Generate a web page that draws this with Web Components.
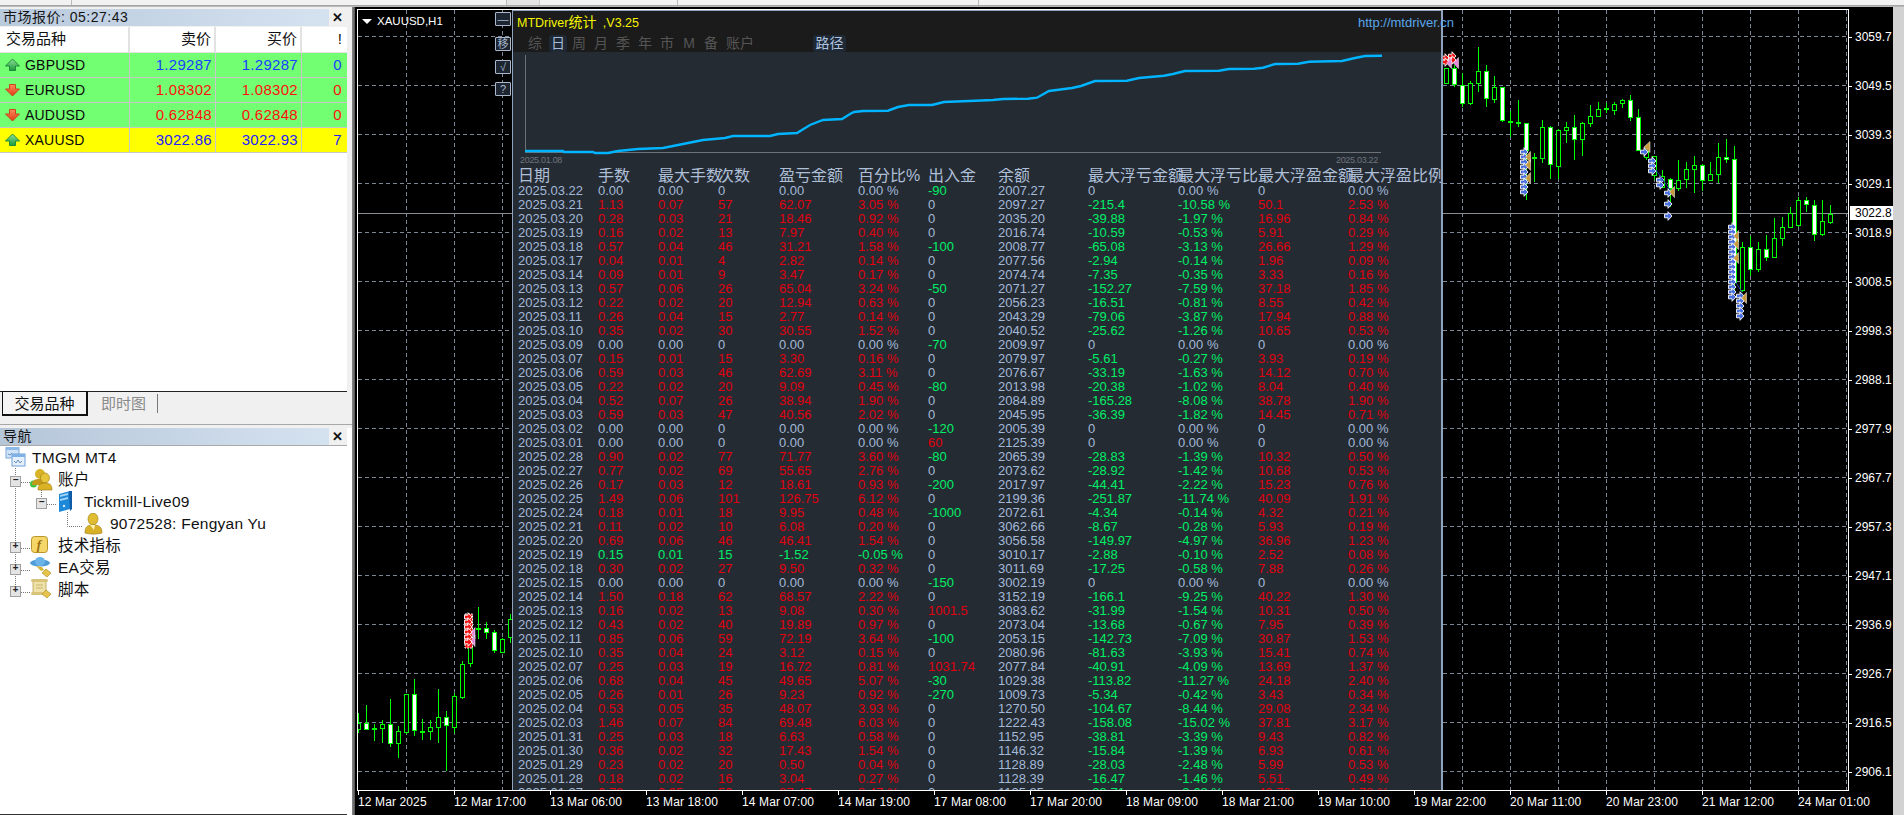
<!DOCTYPE html>
<html lang="zh"><head><meta charset="utf-8"><title>MT4</title>
<style>
html,body{margin:0;padding:0;height:100%;overflow:hidden;background:#f0f0f0;font-family:"Liberation Sans","Noto Sans CJK SC",sans-serif}
</style></head><body>
<mt-app>
  <market-watch slot="mw" time="05:27:43"></market-watch>
  <nav-panel slot="nav"></nav-panel>
  <chart-view slot="chart"></chart-view>
</mt-app>
<script>
const FF='"Liberation Sans","Noto Sans CJK SC",sans-serif';
function def(name,fn){customElements.define(name,class extends HTMLElement{
  constructor(){super();this.attachShadow({mode:'open'});}
  connectedCallback(){this.shadowRoot.innerHTML=fn(this);}
});}

def('mt-app',()=>`<style>
:host{display:grid;grid-template-columns:352px 3px 1fr 11px;grid-template-rows:5px 2px 1fr;width:1904px;height:815px;overflow:hidden;background:#f0f0f0}
.tb{grid-column:1/-1;background:#f2f2f2;display:flex;position:relative}
.tb i{display:block;height:5px;border-left:1px solid #bbb}
.sep{grid-column:1/-1;background:linear-gradient(#9a9a9a,#c4c4c4)}
.left{display:grid;grid-template-rows:417px 1fr;min-height:0;overflow:hidden}
.div{background:linear-gradient(90deg,#8a8a8a,#555)}
.gut{background:#d2d2d2}
.ch{min-width:0;min-height:0;background:#000}
</style>
<div class="tb"><i style="margin-left:71px"></i><i style="margin-left:434px;width:32px;background:#e4e4e4;border-right:1px solid #ccc"></i><i style="margin-left:137px"></i><i style="margin-left:300px"></i></div>
<div class="sep"></div>
<div class="left"><slot name="mw"></slot><slot name="nav"></slot></div>
<div class="div"></div>
<div class="ch"><slot name="chart"></slot></div>
<div class="gut"></div>`);

def('title-bar',h=>`<style>
:host{display:flex;height:17px;align-items:center;font:14px/17px ${FF};color:#141414;letter-spacing:.5px}
.t{flex:0 0 329px;height:17px;background:linear-gradient(90deg,${h.getAttribute('from')||'#b9cadd'},#d5e2f0);padding-left:3px;box-sizing:border-box;white-space:nowrap;overflow:hidden}
.x{flex:0 0 18px;text-align:center;font:bold 13px/17px ${FF};color:#111}
</style><div class="t"><slot></slot></div><div class="x">✕</div>`);

const arrow=(up)=>up
 ?`<svg width="15" height="14" viewBox="0 0 15 14"><defs><linearGradient id="u" x1="0" y1="0" x2="0" y2="1"><stop offset="0" stop-color="#8fe09a"/><stop offset="1" stop-color="#1c9a3a"/></linearGradient></defs><path d="M7.500 1 14.500 8H10.500V12.500H4.500V8H.5z" fill="url(#u)" stroke="#1f8a3a" stroke-linejoin="round"/></svg>`
 :`<svg width="15" height="14" viewBox="0 0 15 14"><defs><linearGradient id="d" x1="0" y1="0" x2="0" y2="1"><stop offset="0" stop-color="#fb8a5c"/><stop offset="1" stop-color="#e23a12"/></linearGradient></defs><path d="M7.500 13 14.500 6H10.500V1.500H4.500V6H.5z" fill="url(#d)" stroke="#c8451f" stroke-linejoin="round"/></svg>`;

def('quote-row',h=>{
 const a=k=>h.getAttribute(k);
 return `<style>
:host{display:grid;grid-template-columns:130px 86px 86px 45px;height:25px;box-sizing:border-box;border-bottom:1px solid #c8c8c8;background:${a('bg')};font:15px/24px ${FF};letter-spacing:.3px;color:${a('color')}}
div{border-right:1px solid #c8c8c8;text-align:right;padding-right:3px;box-sizing:border-box;height:24px;white-space:nowrap}
.s{display:flex;align-items:center;text-align:left;color:#0a0a0a;font-size:14px;letter-spacing:.2px;padding-left:5px}
.s svg{margin-right:5px;flex:none}
div:last-child{border:none;padding-right:5px}
</style><div class="s">${arrow(a('dir')==='up')}${a('sym')}</div><div>${a('bid')}</div><div>${a('ask')}</div><div>${a('n')}</div>`;
});

def('market-watch',h=>`<style>
:host{display:flex;flex-direction:column;height:417px;box-sizing:border-box;padding-top:2px;background:#f0f0f0;font-family:${FF}}
.body{width:347px;height:364px;margin-top:1px;background:#fff;box-sizing:border-box}
.hd{display:grid;grid-template-columns:130px 86px 86px 45px;height:26px;background:#fff;font:15px/24px ${FF};color:#111;box-sizing:border-box}
.hd div{border-right:2px solid #e2e2e2;border-bottom:1px solid #e2e2e2;text-align:right;padding-right:3px;box-sizing:border-box;height:26px}
.hd div:first-child{text-align:left;padding-left:6px}
.hd div:last-child{padding-right:5px;border-right:0}
.tabs{display:flex;height:25px;width:347px;box-sizing:border-box;border-top:1px solid #222;font:15px/24px ${FF}}
.tab{box-sizing:border-box;width:86px;margin-top:-1px;margin-left:2px;border:solid #111;border-width:1px 2px 2px 1px;background:#f5f5f5;text-align:center;color:#111;height:25px}
.off{padding:0 11px 0 13px;margin:2px 0;height:19px;line-height:19px;color:#8a8a8a;border-right:1px solid #777}
</style>
<title-bar><span>市场报价: ${h.getAttribute('time')}</span></title-bar>
<div class="body">
<div class="hd"><div>交易品种</div><div>卖价</div><div>买价</div><div>!</div></div>
<quote-row bg="#72ff72" color="#1a40ff" dir="up" sym="GBPUSD" bid="1.29287" ask="1.29287" n="0"></quote-row>
<quote-row bg="#72ff72" color="#ff1010" dir="down" sym="EURUSD" bid="1.08302" ask="1.08302" n="0"></quote-row>
<quote-row bg="#72ff72" color="#ff1010" dir="down" sym="AUDUSD" bid="0.62848" ask="0.62848" n="0"></quote-row>
<quote-row bg="#ffff00" color="#2222ff" dir="up" sym="XAUUSD" bid="3022.86" ask="3022.93" n="7"></quote-row>
</div>
<div class="tabs"><div class="tab">交易品种</div><div class="off">即时图</div></div>`);

const ICONS={
 term:`<rect x="2" y="0" width="13" height="11" fill="#cfe2f7" stroke="#7fa8d8"/><rect x="2" y="0" width="13" height="3" fill="#8db8e8"/><rect x="8" y="7" width="13" height="12" fill="#e4f0fc" stroke="#6f9fd6"/><rect x="8" y="7" width="13" height="3" fill="#7fb0e6"/><path d="M10 14l2 2 2-3 2 3 2-2M4 7l2 1 2-2" fill="none" stroke="#6b90b8"/>`,
 users:`<circle cx="3.500" cy="15" r="3.500" fill="#3fc43f"/><ellipse cx="10" cy="5" rx="5" ry="5" fill="#d9b226"/><path d="M2 16c0-5 3-6 8-6s7 2 7 6z" fill="#c49a1c"/><ellipse cx="15" cy="9" rx="4.500" ry="5" fill="#e6c53a" stroke="#9a7a10" stroke-width=".6"/><path d="M8 21c0-6 3-7 7-7s7 1 7 7z" fill="#d9b226" stroke="#9a7a10" stroke-width=".6"/>`,
 server:`<path d="M3 3l11-3v18l-11 3z" fill="#1e88d8"/><path d="M13 0h3v18l-2 2z" fill="#0f5ca6"/><path d="M4 4l8-2v2l-8 2zM4 8l8-2v2l-8 2z" fill="#9fd4f8"/><circle cx="8" cy="15" r="1.200" fill="#cfeaff"/>`,
 user:`<ellipse cx="11" cy="6" rx="5" ry="6" fill="#e0bd30" stroke="#98790f" stroke-width=".6"/><path d="M3 20c0-7 3-8 8-8s9 1 9 8c-5 1.500-12 1.500-17 0z" fill="#d8b026" stroke="#98790f" stroke-width=".6"/><path d="M8 12l4 5 1-5z" fill="#fff3b0"/>`,
 func:`<rect x="1.500" y="1.500" width="16" height="16" rx="3" fill="#f4d768" stroke="#b8942a"/><text x="9" y="14" font-family="Liberation Serif,serif" font-style="italic" font-weight="bold" font-size="13" fill="#9a6c10" text-anchor="middle">f</text>`,
 ea:`<ellipse cx="10" cy="6" rx="10" ry="3.500" fill="#4d9cd8"/><ellipse cx="10" cy="4.500" rx="5" ry="4.500" fill="#6ab4ea"/><path d="M6 9l6 1 2 3-3 1z" fill="#d8b43a"/><path d="M16 12l5 4-4 4-5-4z" fill="#e6c34a" stroke="#a88820" stroke-width=".6"/>`,
 script:`<path d="M3 1h13v14H3z" fill="#efe2a8" stroke="#b8a050" stroke-width=".8"/><rect x="1" y="0" width="17" height="3" rx="1.500" fill="#d8c478"/><rect x="1" y="13" width="13" height="3" rx="1.500" fill="#d8c478"/><path d="M6 6h7M6 9h7" stroke="#c8b470"/><path d="M16 11l5 4-4 4-5-4z" fill="#e6c34a" stroke="#a88820" stroke-width=".6"/>`
};

def('tree-item',h=>{
 const L=+h.getAttribute('level'),e=h.getAttribute('exp');
 const ex=e?`<b class="e">${e}</b>`:'';
 return `<style>
:host{display:flex;align-items:center;height:22px;position:relative;padding-left:${6+26*L}px;font:15.500px/22px ${FF};letter-spacing:.25px;color:#111;white-space:nowrap}
svg{margin-left:-2px;margin-right:4px;flex:none}
.e{position:absolute;left:${10+26*(L-1)}px;top:7px;width:9px;height:9px;border:1px solid #a0a0a0;background:#e4e4e4;font:bold 10px/8px "Liberation Mono",monospace;text-align:center;color:#222;letter-spacing:0}
</style>${ex}<svg width="24" height="22" viewBox="0 0 24 22">${ICONS[h.getAttribute('icon')]}</svg><slot></slot>`;
});

def('nav-panel',()=>`<style>
:host{display:grid;grid-template-rows:1px 3px 1fr 8px;height:398px;box-sizing:border-box;background:#fff;font-family:${FF};overflow:hidden}
.top{background:#a8a8a8}
.bar{background:#f0f0f0}
.wrap{display:flex;flex-direction:column;min-height:0;overflow:hidden}
title-bar{background:#f0f0f0;width:347px;flex:none}
.rule{height:1px;background:#aaa;width:347px;flex:none}
.tree{position:relative;flex:1;padding-top:1px;width:347px}
.lines{position:absolute;left:0;top:0;pointer-events:none}
.tabs{display:flex;height:8px;overflow:hidden;border-top:1px solid #333;background:#f0f0f0;box-sizing:border-box;width:347px;font:14px/16px ${FF}}
.tabs span{display:block;width:52px;margin-left:2px;text-align:center;background:#fff;border-right:1px solid #333;color:#222;height:12px}
.tabs span+span{margin-left:0;background:none;color:#555;width:60px;border-right:1px solid #999}
</style>
<div class="top"></div><div class="bar"></div>
<div class="wrap">
<title-bar from="#b5c6d9"><span>导航</span></title-bar><div class="rule"></div>
<div class="tree">
<svg class="lines" width="347" height="170"><g stroke="#777" stroke-dasharray="1 1" fill="none"><path d="M15.500 22V146M21 36.500h9M47 58.500h10M41.500 44V52M67.500 66V80.500H82M21 102.500h9M21 124.500h9M21 146.500h9"/></g></svg>
<tree-item level="0" icon="term">TMGM MT4</tree-item>
<tree-item level="1" icon="users" exp="−">账户</tree-item>
<tree-item level="2" icon="server" exp="−">Tickmill-Live09</tree-item>
<tree-item level="3" icon="user">9072528: Fengyan Yu</tree-item>
<tree-item level="1" icon="func" exp="+">技术指标</tree-item>
<tree-item level="1" icon="ea" exp="+">EA交易</tree-item>
<tree-item level="1" icon="script" exp="+">脚本</tree-item>
</div></div>
<div class="tabs"><span>常用</span><span>收藏夹</span></div>`);

/* ---------- candle canvas ---------- */
const LC=[[26,340,370,388,400,0],[50,315,370,388,390,1],[74,372,385,389,422,2],[98,360,373,385,428,0],[122,297,373,430,440,1],[146,378,394,430,473,0],[170,283,283,395,402,0],[194,238,283,391,407,1],[218,357,393,396,420,2],[242,360,382,394,420,0],[266,268,352,382,428,0],[290,334,352,376,514,1],[314,280,289,380,398,0],[338,182,193,290,296,0],[362,140,140,190,200,0],[386,22,83,86,116,2],[410,65,83,97,117,1],[434,90,97,150,160,1],[458,115,118,155,160,0],[482,42,58,110,128,0]];
const RC=[[20,205,203,248,248,0],[44,195,203,253,260,1],[68,220,254,310,322,1],[92,244,250,308,315,0],[116,140,214,250,275,0],[140,195,214,295,320,1],[164,228,262,296,310,0],[188,262,262,361,366,1],[212,333,362,368,412,2],[236,300,367,371,382,2],[260,370,370,450,600,1],[284,460,472,476,545,2],[308,360,382,473,490,0],[332,378,381,493,537,1],[356,387,391,497,538,0],[380,366,382,391,428,0],[404,345,382,418,480,1],[428,367,370,418,468,0],[452,316,347,370,382,0],[476,306,328,347,347,0],[500,310,325,328,340,2],[524,307,311,331,345,0],[548,297,301,310,325,0],[572,285,301,352,362,1],[596,328,352,451,451,1],[620,450,452,470,480,0],[644,469,469,525,540,0],[668,510,528,560,565,0],[692,535,536,565,620,1],[716,480,541,565,572,0],[740,487,508,538,563,0],[764,468,494,508,578,0],[788,492,494,541,572,1],[812,487,523,541,541,0],[836,428,472,523,550,0],[860,418,472,478,490,1],[884,438,476,845,875,1],[908,725,742,870,875,0],[932,708,740,808,828,1],[956,727,748,808,815,0],[980,705,748,770,782,1],[1004,655,715,770,772,0],[1028,652,682,715,738,0],[1052,620,640,680,682,0],[1076,590,601,674,682,0],[1100,592,601,613,637,1],[1124,600,614,703,722,1],[1148,600,664,703,707,0],[1172,616,641,665,672,0]];
function candle(cx,h,t,b,l,f){
 cx=Math.floor(cx);h=Math.round(h);t=Math.round(t);b=Math.round(b);l=Math.round(l);
 let s=`<path d="M${cx+.5} ${h}V${l}" stroke="#00ff00"/>`;
 if(f===2) return s+`<rect x="${cx-2}" y="${t}" width="5" height="2" fill="#00ff00"/>`;
 return s+`<rect x="${cx-1.5}" y="${t+.5}" width="4" height="${Math.max(b-t,2)}" fill="${f?'#fff':'#000'}" stroke="#00ff00"/>`;
}
function arr(x,y,fill){return `<path d="M${x-3.500} ${y-1.800}h3.500v-2.500l4 4.300-4 4.300v-2.500h-3.500z" fill="${fill}" stroke="#fff" stroke-width=".9"/>`;}
function tri(x,y,fill,w=5){return `<path d="M${x+w/2} ${y-5.500}V${y+5.500}L${x-w/2} ${y}z" fill="${fill}" stroke="#fff" stroke-width=".5"/>`;}
function stack(x,y0,y1,step,fill){let s='';for(let y=y0;y<=y1;y+=step)s+=arr(x,y,fill);return s;}
function canvas(){
 let g='';
 for(let y=36.5;y<790;y+=49)g+=`<path d="M358 ${y}H1848"/>`;
 for(let x=406.5;x<1848;x+=48)g+=`<path d="M${x} 10V790"/>`;
 let c='';
 LC.forEach(r=>c+=candle(350+r[0]/3,600+r[1]/3,600+r[2]/3,600+r[3]/3,600+r[4]/3,r[5]));
 RC.forEach(r=>c+=candle(1440+r[0]/3,r[1]/3,r[2]/3,r[3]/3,r[4]/3,r[5]));
 const B='#4a6fe0',O='#c89a3c',P='#e488dc',R='#f01414';
 let m='';
 m+=stack(1524,152,196,5,B)+tri(1528,157,O)+tri(1528,165,O)+tri(1528,178,O);
 m+=arr(1644,152,B)+tri(1647,147,O,6);
 m+=stack(1652,161,174,5,B)+stack(1660,180,187,5,B)+arr(1668,193,B)+arr(1668,204,B)+arr(1668,216,B)+tri(1672,192,O);
 m+=`<path d="M1656 170L1670 190M1734 280L1742 292" stroke="#2438a8" fill="none"/>`;
 m+=stack(1732,227,298,5,B)+tri(1736,236,O)+tri(1736,244,O)+tri(1736,258,O);
 m+=stack(1740,296,319,5,B)+tri(1744,298,O);
 m+=arr(1445,58,R)+arr(1445,62,R)+arr(1452,56,R)+arr(1452,60,R)+tri(1449,63,P)+tri(1456,63,P);
 m+=`<rect x="465" y="614" width="7.500" height="34" fill="${R}" stroke="#fff" stroke-dasharray="2 1"/>`+tri(473,633,P,4)+tri(473,641,P,4)+stack(468,617,645,5,R);
 return `<svg viewBox="358 10 1490 780" width="1490" height="780" style="display:block;position:absolute;left:0;top:0">
 <g stroke="#7b8696" fill="none" stroke-dasharray="4 3" shape-rendering="crispEdges">${g}</g>
 <path d="M358 213.500H1848" stroke="#8a8f96" shape-rendering="crispEdges"/>
 <g shape-rendering="crispEdges">${c}</g>${m}</svg>`;
}

const RAW=`03.22|0.00|0.00|0|0.00|0.00|-90|2007.27|0|0.00|0|0.00
03.21|1.13|0.07|57|62.07|3.05|0|2097.27|-215.4|-10.58|50.1|2.53
03.20|0.28|0.03|21|18.46|0.92|0|2035.20|-39.88|-1.97|16.96|0.84
03.19|0.16|0.02|13|7.97|0.40|0|2016.74|-10.59|-0.53|5.91|0.29
03.18|0.57|0.04|46|31.21|1.58|-100|2008.77|-65.08|-3.13|26.66|1.29
03.17|0.04|0.01|4|2.82|0.14|0|2077.56|-2.94|-0.14|1.96|0.09
03.14|0.09|0.01|9|3.47|0.17|0|2074.74|-7.35|-0.35|3.33|0.16
03.13|0.57|0.06|26|65.04|3.24|-50|2071.27|-152.27|-7.59|37.18|1.85
03.12|0.22|0.02|20|12.94|0.63|0|2056.23|-16.51|-0.81|8.55|0.42
03.11|0.26|0.04|15|2.77|0.14|0|2043.29|-79.06|-3.87|17.94|0.88
03.10|0.35|0.02|30|30.55|1.52|0|2040.52|-25.62|-1.26|10.65|0.53
03.09|0.00|0.00|0|0.00|0.00|-70|2009.97|0|0.00|0|0.00
03.07|0.15|0.01|15|3.30|0.16|0|2079.97|-5.61|-0.27|3.93|0.19
03.06|0.59|0.03|46|62.69|3.11|0|2076.67|-33.19|-1.63|14.12|0.70
03.05|0.22|0.02|20|9.09|0.45|-80|2013.98|-20.38|-1.02|8.04|0.40
03.04|0.52|0.07|26|38.94|1.90|0|2084.89|-165.28|-8.08|38.78|1.90
03.03|0.59|0.03|47|40.56|2.02|0|2045.95|-36.39|-1.82|14.45|0.71
03.02|0.00|0.00|0|0.00|0.00|-120|2005.39|0|0.00|0|0.00
03.01|0.00|0.00|0|0.00|0.00|60|2125.39|0|0.00|0|0.00
02.28|0.90|0.02|77|71.77|3.60|-80|2065.39|-28.83|-1.39|10.32|0.50
02.27|0.77|0.02|69|55.65|2.76|0|2073.62|-28.92|-1.42|10.68|0.53
02.26|0.17|0.03|12|18.61|0.93|-200|2017.97|-44.41|-2.22|15.23|0.76
02.25|1.49|0.06|101|126.75|6.12|0|2199.36|-251.87|-11.74|40.09|1.91
02.24|0.18|0.01|18|9.95|0.48|-1000|2072.61|-4.34|-0.14|4.32|0.21
02.21|0.11|0.02|10|6.08|0.20|0|3062.66|-8.67|-0.28|5.93|0.19
02.20|0.69|0.06|46|46.41|1.54|0|3056.58|-149.97|-4.97|36.96|1.23
02.19|0.15|0.01|15|-1.52|-0.05|0|3010.17|-2.88|-0.10|2.52|0.08
02.18|0.30|0.02|27|9.50|0.32|0|3011.69|-17.25|-0.58|7.88|0.26
02.15|0.00|0.00|0|0.00|0.00|-150|3002.19|0|0.00|0|0.00
02.14|1.50|0.18|62|68.57|2.22|0|3152.19|-166.1|-9.25|40.22|1.30
02.13|0.16|0.02|13|9.08|0.30|1001.5|3083.62|-31.99|-1.54|10.31|0.50
02.12|0.43|0.02|40|19.89|0.97|0|2073.04|-13.68|-0.67|7.95|0.39
02.11|0.85|0.06|59|72.19|3.64|-100|2053.15|-142.73|-7.09|30.87|1.53
02.10|0.35|0.04|24|3.12|0.15|0|2080.96|-81.63|-3.93|15.41|0.74
02.07|0.25|0.03|19|16.72|0.81|1031.74|2077.84|-40.91|-4.09|13.69|1.37
02.06|0.68|0.04|45|49.65|5.07|-30|1029.38|-113.82|-11.27|24.18|2.40
02.05|0.26|0.01|26|9.23|0.92|-270|1009.73|-5.34|-0.42|3.43|0.34
02.04|0.53|0.05|35|48.07|3.93|0|1270.50|-104.67|-8.44|29.08|2.34
02.03|1.46|0.07|84|69.48|6.03|0|1222.43|-158.08|-15.02|37.81|3.17
01.31|0.25|0.03|18|6.63|0.58|0|1152.95|-38.81|-3.39|9.43|0.82
01.30|0.36|0.02|32|17.43|1.54|0|1146.32|-15.84|-1.39|6.93|0.61
01.29|0.23|0.02|20|0.50|0.04|0|1128.89|-28.03|-2.48|5.99|0.53
01.28|0.18|0.02|16|3.04|0.27|0|1128.39|-16.47|-1.46|5.51|0.49
01.27|0.78|0.05|59|87.47|8.47|0|1125.85|-38.71|-3.68|43.78|4.78`;

def('stat-table',()=>{
 const cols='80px 60px 60px 61px 79px 70px 70px 90px 90px 80px 90px 90px';
 const hd=['日期','手数','最大手数','次数','盈亏金额','百分比%','出入金','余额','最大浮亏金额','最大浮亏比','最大浮盈金额','最大浮盈比例'];
 const clsv=v=>{const n=parseFloat(v);return n>0?'r':n<0?'g':'';};
 const rows=RAW.split('\n').map(l=>{
  const p=l.split('|');
  const c=clsv(p[4]);
  const io=clsv(p[6]);
  const ml=clsv(p[8]),mp=clsv(p[10]);
  const cells=[
   ['2025.'+p[0],''],[p[1],c],[p[2],c],[p[3],c],[p[4],c],[p[5]+' %',c],[p[6],io],[p[7],''],
   [p[8],ml?'g':''],[p[9]+' %',ml?'g':''],[p[10],mp?'r':''],[p[11]+' %',mp?'r':'']];
  return '<div class="row">'+cells.map(x=>`<span class="${x[1]}">${x[0]}</span>`).join('')+'</div>';
 }).join('');
 return `<style>
:host{display:block;flex:1;min-height:0;overflow:hidden;padding-left:5px;font:13px/14px ${FF};color:#a3b9d8;white-space:nowrap}
.row,.hd{display:grid;grid-template-columns:${cols};height:14px}
.hd{height:16px;font-size:16px;line-height:16px;color:#aebfd8;width:926px;overflow:hidden}
span{display:block;min-width:0}
.r{color:#e0000f}.g{color:#00ee66}
</style><div class="hd">${hd.map(t=>`<span>${t}</span>`).join('')}</div>${rows}`;
});

const CURVE='525,151 563,151 564,152 593,152 595,153 608,153 618,151 638,149 663,148 673,146 683,144 703,140 725,138 733,136 770,136 778,134 797,133 810,125 823,120 842,119 850,114 854,112 863,111 888,110.7 898,107 909,105 932,105 944,102 969,101 993,100 1003,99 1028,98.7 1037,97.700 1049,91 1072,88 1081,86 1095,81 1127,80.700 1139,78 1164,75.700 1173,74 1185,71 1219,70.700 1229,69 1254,68.700 1263,67.700 1275,64 1298,63.700 1309,61.700 1342,61 1355,58 1365,56 1382,55.700';

def('stats-window',()=>`<style>
:host{display:flex;flex-direction:column;position:absolute;left:154px;top:0;width:931px;height:780px;box-sizing:border-box;border:1px solid #8fa3bf;border-width:1px 2px 0 1px;background:#252b33;font-family:${FF}}
.head{flex:0 0 41px;background:#1b1b1b;position:relative}
.title{height:22px;font:12.500px/23px ${FF};color:#f5f500;padding-left:4px;white-space:nowrap;word-spacing:3px}
.title b{font:normal 14px/23px ${FF}}
.url{position:absolute;left:845px;top:0;font:13px/23px ${FF};color:#5aa6ea;white-space:nowrap}
.tabs{display:flex;margin-top:2px;padding-left:11px;height:17px;font:14px/17px ${FF};color:#555;white-space:nowrap}
.tabs span{display:block;width:22px;text-align:center}
.tabs .on{width:18px;margin:0 1px 0 3px;background:#1e2935;color:#a8bcd8;border-radius:3px}
.tabs .wide{width:36px}
.tabs .path{width:33px;margin-left:55px;background:#1e2935;color:#b0c4e0;border-radius:3px}
svg{flex:0 0 103px;display:block}
.dates{flex:0 0 13px;display:flex;justify-content:space-between;padding:0 63px 0 7px;font:9px/11px ${FF};color:#6f757d;letter-spacing:-.3px}
</style>
<div class="head">
 <div class="title">MTDriver<b>统计</b> ,V3.25</div><div class="url">http://mtdriver.cn</div>
 <div class="tabs"><span>综</span><span class="on">日</span><span>周</span><span>月</span><span>季</span><span>年</span><span>市</span><span>M</span><span>备</span><span class="wide">账户</span><span class="path">路径</span></div>
</div>
<svg width="928" height="103" viewBox="513 52 928 103">
 <path d="M525.500 55V152.500H1381" fill="none" stroke="#6e7276"/>
 <polyline points="${CURVE}" fill="none" stroke="#00b4ff" stroke-width="2.400"/>
</svg>
<div class="dates"><span>2025.01.08</span><span>2025.03.22</span></div>
<stat-table></stat-table>`);

def('chart-view',()=>{
 const prices=['3059.7','3049.5','3039.3','3029.1','3018.9','3008.5','2998.3','2988.1','2977.9','2967.7','2957.3','2947.1','2936.9','2926.7','2916.5','2906.1'];
 const times=['12 Mar 2025','12 Mar 17:00','13 Mar 06:00','13 Mar 18:00','14 Mar 07:00','14 Mar 19:00','17 Mar 08:00','17 Mar 20:00','18 Mar 09:00','18 Mar 21:00','19 Mar 10:00','19 Mar 22:00','20 Mar 11:00','20 Mar 23:00','21 Mar 12:00','24 Mar 01:00'];
 return `<style>
:host{display:grid;grid-template-columns:2px 1492px 1fr;grid-template-rows:2px 782px 1fr;height:808px;background:#000;color:#fff;font:12px/14px ${FF};overflow:hidden}
.plot{grid-column:2;grid-row:2;position:relative;border:1px solid #fff;overflow:hidden;background:#000}
.axis{grid-column:3;grid-row:2;display:flex;flex-direction:column;padding-top:4px;position:relative;overflow:hidden;box-sizing:border-box;height:782px}
.axis span{display:block;flex:0 0 49px;line-height:49px;padding-left:6px;position:relative;white-space:nowrap}
.axis span::before{content:"";position:absolute;left:0;top:24px;width:3px;height:1px;background:#fff}
.cur{position:absolute;left:1px;top:197px;width:44px;height:14px;background:#fff;color:#000;line-height:14px;padding-left:5px;box-sizing:border-box;white-space:nowrap;overflow:hidden}
.time{grid-column:1/-1;grid-row:3;display:flex;padding-left:3px;overflow:hidden}
.time span{flex:0 0 96px;position:relative;padding-top:4px;white-space:nowrap;letter-spacing:.12px;line-height:15px}
.time span::before{content:"";position:absolute;left:0;top:0;width:1px;height:4px;background:#fff}
.name{position:absolute;left:4px;top:4px;display:flex;align-items:center;gap:5px;font:11.500px/14px ${FF};color:#fff;white-space:nowrap}
.name i{display:block;width:0;height:0;border:5px solid transparent;border-top:5px solid #fff;border-bottom:0}
.btns{position:absolute;left:137px;top:2px;display:flex;flex-direction:column}
.btns b{display:block;box-sizing:border-box;width:16px;height:14px;border:1px solid #a9b8cc;border-radius:1px;background:#1c2530;color:#a9b8cc;font:normal 11px/12px ${FF};text-align:center;overflow:hidden}
</style>
<div class="plot">${canvas()}
 <div class="name"><i></i>XAUUSD,H1</div>
 <div class="btns"><b>—</b><b style="margin-top:11px">移</b><b style="margin-top:9px">√</b><b style="margin-top:8px">?</b></div>
 <stats-window></stats-window>
</div>
<div class="axis">${prices.map(p=>`<span>${p}</span>`).join('')}<div class="cur">3022.8</div></div>
<div class="time">${times.map(t=>`<span>${t}</span>`).join('')}</div>`;
});
</script></body></html>
